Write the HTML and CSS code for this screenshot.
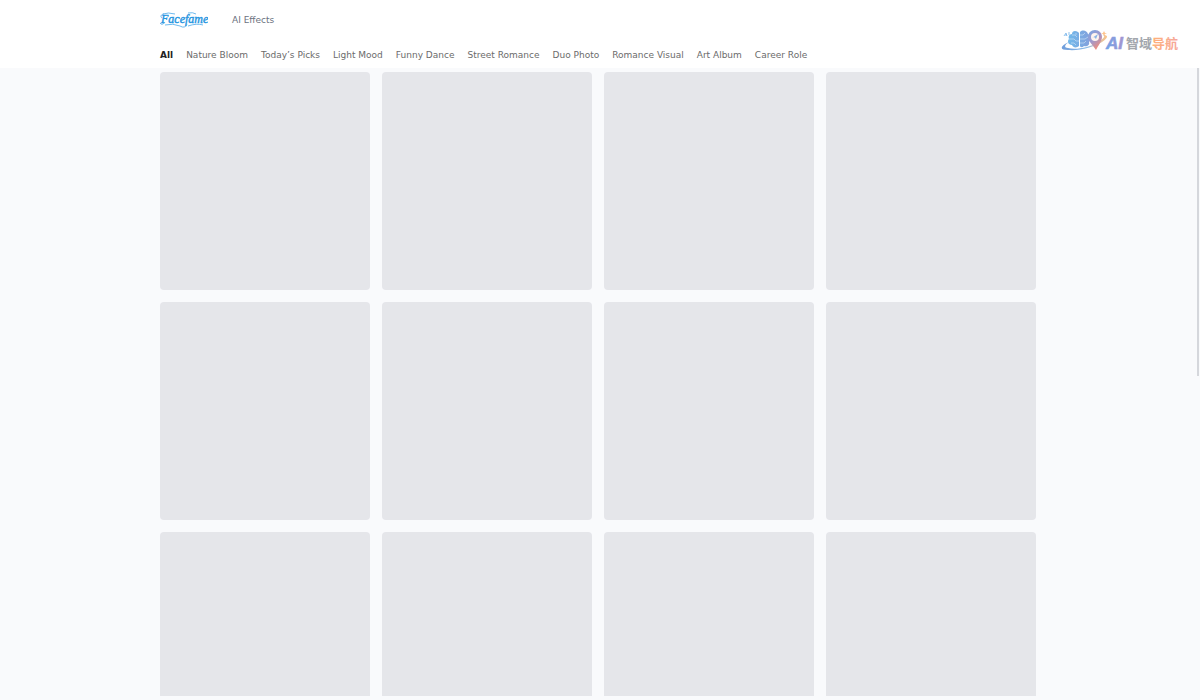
FILE: index.html
```html
<!DOCTYPE html>
<html lang="en">
<head>
    <meta charset="utf-8">
    <title>Facefame</title>
    <link rel="stylesheet" href="styles.css">
</head>
<body>
    <header class="header">
        <div class="topbar container">
            <a class="logo" href="#" aria-label="Facefame">
                <svg width="48" height="18" viewBox="0 0 48 18">
                    <text class="logo-text" x="1" y="12">Facefame</text>
                    <path d="M4 3C1 3 0 6 2 7M3 3Q8 1 15 3M0 12Q2 15 5 11M5 14Q13 12 20 15Q25 18 27 13M28 2Q33 1 36 3M28 15Q37 12 43 14"/>
                </svg>
            </a>
            <a class="effects" href="#">AI Effects</a>
        </div>
        <nav class="tabs container">
            <a class="tab active" href="#">All</a>
            <a class="tab" href="#">Nature Bloom</a>
            <a class="tab" href="#">Today’s Picks</a>
            <a class="tab" href="#">Light Mood</a>
            <a class="tab" href="#">Funny Dance</a>
            <a class="tab" href="#">Street Romance</a>
            <a class="tab" href="#">Duo Photo</a>
            <a class="tab" href="#">Romance Visual</a>
            <a class="tab" href="#">Art Album</a>
            <a class="tab" href="#">Career Role</a>
        </nav>
    </header>

    <main class="content">
        <div class="grid container">
            <div class="card"></div>
            <div class="card"></div>
            <div class="card"></div>
            <div class="card"></div>
            <div class="card"></div>
            <div class="card"></div>
            <div class="card"></div>
            <div class="card"></div>
            <div class="card"></div>
            <div class="card"></div>
            <div class="card"></div>
            <div class="card"></div>
        </div>
        <div class="scroll-thumb"></div>
    </main>

    <div class="badge">
        <svg width="120" height="26" viewBox="0 0 120 26">
            <defs>
                <linearGradient id="brain" x1="0" y1="0" x2="1" y2="0">
                    <stop offset="0" stop-color="#71b9ea"/>
                    <stop offset="1" stop-color="#83a0dc"/>
                </linearGradient>
                <linearGradient id="pin" x1="0" y1="0" x2="0.6" y2="1">
                    <stop offset="0" stop-color="#79a7e4"/>
                    <stop offset="0.55" stop-color="#a198cb"/>
                    <stop offset="1" stop-color="#f58e79"/>
                </linearGradient>
                <linearGradient id="ring" x1="0" y1="0" x2="1" y2="0">
                    <stop offset="0" stop-color="#6f9ddb"/>
                    <stop offset="0.55" stop-color="#8dbde9"/>
                    <stop offset="1" stop-color="#ffc487"/>
                </linearGradient>
                <linearGradient id="ai" x1="0" y1="0" x2="1" y2="0">
                    <stop offset="0" stop-color="#6fa3e8"/>
                    <stop offset="1" stop-color="#a694cf"/>
                </linearGradient>
                <linearGradient id="nav" x1="0" y1="0" x2="1" y2="0">
                    <stop offset="0" stop-color="#ffb078"/>
                    <stop offset="1" stop-color="#f5a79c"/>
                </linearGradient>
            </defs>
            <!-- brain -->
            <path fill="url(#brain)" d="M18 4C15 2 12 3 12 6C9 6 8 9 9 11C7 13 8 17 12 17C13 20 17 20 19 18V5ZM20 4C23 1 27 3 28 6C31 8 31 12 29 14C30 17 27 19 24 18C22 20 20 19 20 18Z"/>
            <path fill="none" stroke="#e4f2fc" stroke-width=".5" d="M12 7H15L17 9M9 11H14L16 13H19M11 15H14L16 17M16 5V7M20 7H23L25 5M20 11H25L28 9M20 15H24L26 13"/>
            <!-- orbit -->
            <path fill="url(#ring)" d="M9 14C0 18 -1 22 8 22C20 23 34 19 42 14C48 10 49 7 43 7C46 8 43 11 39 14C29 20 15 22 8 20C4 20 4 17 9 14Z"/>
            <!-- map pin -->
            <path fill="url(#pin)" d="M35 2C39 2 42 5 42 9C42 13 38 18 36 22C33 17 28 13 28 9C28 5 31 2 35 2Z"/>
            <circle cx="35" cy="9" r="4" fill="#fff4ee"/>
            <path fill="#8bb6e5" d="M32 10L38 6L36 11L34 9Z"/>
            <path fill="none" stroke="#75b2e8" stroke-width=".8" d="M4 8L6 5L7 8M5 7H7M9 4V7"/>
            <path fill="#ffc48b" d="M44 3L45 5L47 5L45 6L44 8L43 6L41 5L43 5Z"/>
            <text class="badge-ai" x="46" y="21" fill="url(#ai)" stroke="url(#ai)">AI</text>
            <text class="badge-name" x="66" y="20" fill="#a3a7ad">智域</text>
            <text class="badge-name" x="92" y="20" fill="url(#nav)">导航</text>
        </svg>
    </div>
</body>
</html>
```
FILE: styles.css
```css
* {
    box-sizing: border-box;
}
body {
    margin: 0;
    height: 100vh;
    display: flex;
    flex-direction: column;
    padding-bottom: 4px;
    font-family: "DejaVu Sans", Verdana, sans-serif;
    font-size: 9px;
    background-color: #f9fafc;
}
a {
    text-decoration: none;
}
.container {
    max-width: 876px;
    margin: 0 auto;
}
.header {
    background-color: white;
    padding-right: 4px;
}
.topbar {
    display: flex;
    align-items: center;
    gap: 24px;
    height: 40px;
}
.logo {
    display: flex;
}
.logo path {
    fill: none;
    stroke: #4aa8e8;
    stroke-width: 0.8;
}
.logo-text {
    font: italic 12px "Liberation Serif", serif;
    fill: #2394df;
    stroke: #2394df;
    stroke-width: 0.4;
}
.effects {
    color: #6b7280;
}
.tabs {
    display: flex;
    gap: 13px;
    height: 28px;
    line-height: 30px;
    white-space: nowrap;
}
.tab {
    color: #6b6b6b;
}
.tab.active {
    color: #222;
    font-weight: bold;
}
.content {
    position: relative;
    flex: 1;
    min-height: 0;
    overflow: hidden;
    padding: 4px 4px 0 0;
}
.grid {
    display: grid;
    grid-template-columns: repeat(4, 1fr);
    gap: 12px;
}
.card {
    height: 218px;
    border-radius: 4px;
    background-color: #e5e6ea;
}
.scroll-thumb {
    position: absolute;
    top: 0;
    right: 1px;
    width: 2px;
    height: 49%;
    background-color: #d5d7dc;
}
.badge {
    position: absolute;
    top: 28px;
    right: 20px;
}
.badge svg {
    display: block;
}
.badge-ai {
    font: italic bold 17px "Liberation Sans", sans-serif;
    stroke-width: 0.6;
}
.badge-name {
    font: bold 13px "Noto Sans CJK SC", sans-serif;
}
```
